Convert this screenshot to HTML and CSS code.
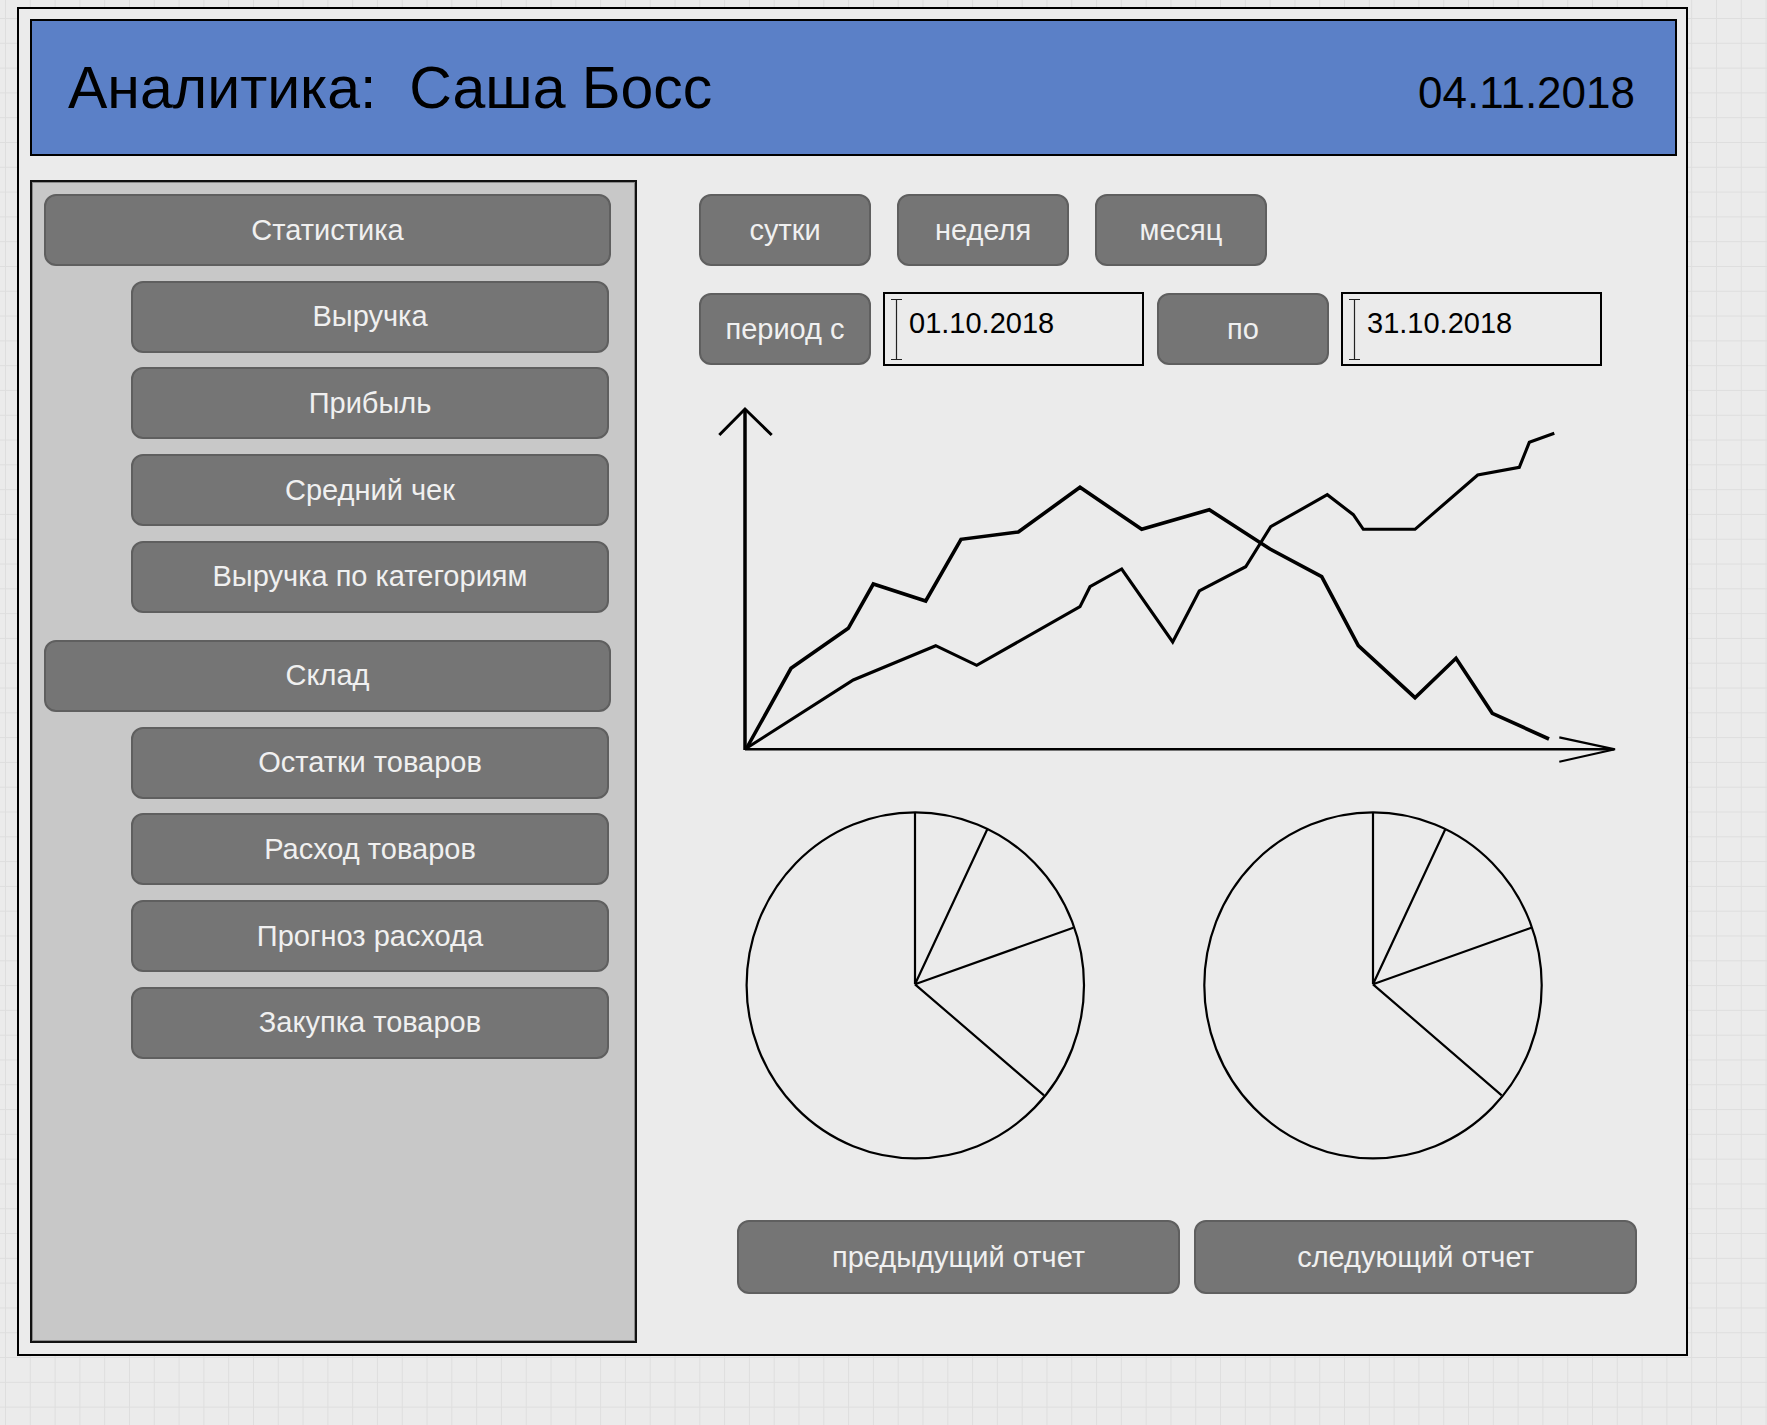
FILE: index.html
```html
<!DOCTYPE html>
<html lang="ru">
<head>
<meta charset="utf-8">
<title>Аналитика</title>
<link rel="stylesheet" href="styles.css">
</head>
<body>
<div class="frame">
  <header class="header">
    <h1 class="title">Аналитика:&nbsp; Саша Босс</h1>
    <div class="date">04.11.2018</div>
  </header>
  <div class="main">
    <nav class="sidebar">
      <div class="btn nav-top">Статистика</div>
      <div class="btn nav-sub">Выручка</div>
      <div class="btn nav-sub">Прибыль</div>
      <div class="btn nav-sub">Средний чек</div>
      <div class="btn nav-sub">Выручка по категориям</div>
      <div class="btn nav-top section">Склад</div>
      <div class="btn nav-sub">Остатки товаров</div>
      <div class="btn nav-sub">Расход товаров</div>
      <div class="btn nav-sub">Прогноз расхода</div>
      <div class="btn nav-sub">Закупка товаров</div>
    </nav>
    <section class="content">
      <div class="row">
        <div class="btn period">сутки</div>
        <div class="btn period">неделя</div>
        <div class="btn period">месяц</div>
      </div>
      <div class="row range">
        <div class="btn period">период с</div>
        <div class="field">
          <svg class="caret" width="11" height="61" viewBox="0 0 11 61"><path d="M0 0.5H11M5.5 0.5V60.5M0 60.5H11" stroke="#222" stroke-width="1.2" fill="none"/></svg>
          <span class="field-text">01.10.2018</span>
        </div>
        <div class="btn period">по</div>
        <div class="field">
          <svg class="caret" width="11" height="61" viewBox="0 0 11 61"><path d="M0 0.5H11M5.5 0.5V60.5M0 60.5H11" stroke="#222" stroke-width="1.2" fill="none"/></svg>
          <span class="field-text">31.10.2018</span>
        </div>
      </div>
      <svg class="chart" width="960" height="380" viewBox="699 390 960 380">
        <g fill="none" stroke="#000" stroke-linejoin="miter" stroke-linecap="butt">
          <line x1="745" y1="750" x2="745" y2="410" stroke-width="3.5"/>
          <polyline points="719.3,435 745,409 771.7,435" stroke-width="3"/>
          <line x1="745" y1="749.3" x2="1614" y2="749.3" stroke-width="2.5"/>
          <polyline points="1559.3,737.3 1615,749.3 1559.3,761.7" stroke-width="2.2"/>
          <polyline stroke-width="3.6" points="746.7,748 791,668.3 848.3,628.3 873.3,584 925.7,601 961,539.3 1018.3,532 1080,487.3 1141.7,529.3 1209.3,509.7 1270,549 1321.7,576.7 1358.3,645.7 1415,697.7 1456,658.3 1492.3,713.3 1549,739"/>
          <polyline stroke-width="3.1" points="746.7,748 853.3,680 935.7,645.7 976.7,665.3 1080,606.7 1090,586.7 1121.7,569 1172.7,642 1199.3,591 1245.7,566.7 1270.7,526.7 1327.3,494.7 1353.3,514.7 1363.3,529.3 1415,529.3 1477.7,475 1519.3,467.3 1529.3,442.3 1554.3,433.3"/>
        </g>
      </svg>
      <svg class="pies" width="960" height="380" viewBox="699 790 960 380">
        <g fill="none" stroke="#000" stroke-width="2.2">
          <ellipse cx="915.3" cy="985.3" rx="168.7" ry="173"/>
          <path d="M915 984.3L915 812.3M915 984.3L987.3 829.3M915 984.3L1073.3 927.7M915 984.3L1044 1095.3"/>
          <ellipse cx="1373" cy="985.3" rx="168.7" ry="173"/>
          <path d="M1373 984.3L1373 812.3M1373 984.3L1445.3 829.3M1373 984.3L1531.3 927.7M1373 984.3L1501.7 1095.3"/>
        </g>
      </svg>
      <div class="report-nav">
        <div class="btn report">предыдущий отчет</div>
        <div class="btn report">следующий отчет</div>
      </div>
    </section>
  </div>
</div>
</body>
</html>
```

FILE: styles.css
```css
html, body {
  margin: 0;
  padding: 0;
}

body {
  width: 1767px;
  height: 1425px;
  overflow: hidden;
  background-color: #ebebeb;
  background-image:
    linear-gradient(#dedede 1px, transparent 1px),
    linear-gradient(90deg, #dedede 1px, transparent 1px);
  background-size: 24.8px 24.8px;
  background-position: 5px 18px;
  font-family: "Liberation Sans", Arial, sans-serif;
  padding-top: 7px;
  box-sizing: border-box;
}

.frame {
  margin-left: 17px;
  width: 1671px;
  height: 1349px;
  box-sizing: border-box;
  border: 2px solid #000;
  background: #ebebeb;
  padding: 10px 9px 0 11px;
}

.header {
  height: 137px;
  box-sizing: border-box;
  border: 2px solid #000;
  background: #5b80c7;
  display: flex;
  justify-content: space-between;
  align-items: baseline;
  padding: 33px 40px 0 36px;
}

.title {
  margin: 0;
  font-weight: normal;
  font-size: 59px;
  color: #000;
  white-space: pre;
}

.date {
  font-size: 44px;
  color: #000;
}

.main {
  margin-top: 24px;
  display: flex;
}

.sidebar {
  flex: none;
  width: 607px;
  height: 1163px;
  box-sizing: border-box;
  border: 2px solid #111;
  box-shadow: inset 0 0 0 1px #8a8a8a;
  background: #c8c8c8;
  padding-top: 12px;
  display: flex;
  flex-direction: column;
  gap: 14.7px;
}

.btn {
  flex: none;
  box-sizing: border-box;
  height: 72px;
  background: #757575;
  border: 2px solid #5f5f5f;
  border-radius: 12px;
  color: #f0f0f0;
  font-size: 29px;
  display: flex;
  align-items: center;
  justify-content: center;
  white-space: nowrap;
}

.nav-top {
  margin-left: 12px;
  width: 567px;
}

.nav-sub {
  margin-left: 99px;
  width: 478px;
}

.section {
  margin-top: 12.5px;
}

.content {
  flex: 1;
  min-width: 0;
  margin-left: 62px;
  padding-top: 14px;
}

.row {
  display: flex;
  gap: 26px;
}

.range {
  margin-top: 26px;
  align-items: center;
  gap: 12px;
}

.period {
  width: 172px;
}

.field {
  flex: none;
  box-sizing: border-box;
  width: 261px;
  height: 74px;
  border: 2px solid #000;
  display: flex;
  align-items: flex-start;
  padding: 5px 0 0 6px;
}

.range .field + .btn {
  margin-left: 1px;
}

.caret {
  display: block;
  flex: none;
}

.field-text {
  margin-left: 7px;
  margin-top: 8px;
  font-size: 29px;
  color: #000;
}

.chart,
.pies {
  display: block;
}

.chart {
  margin-top: 24px;
}

.pies {
  margin-top: 20px;
}

.report-nav {
  margin-top: 50px;
  margin-left: 38px;
  display: flex;
  gap: 14px;
}

.report {
  width: 443px;
  height: 74px;
}
```
